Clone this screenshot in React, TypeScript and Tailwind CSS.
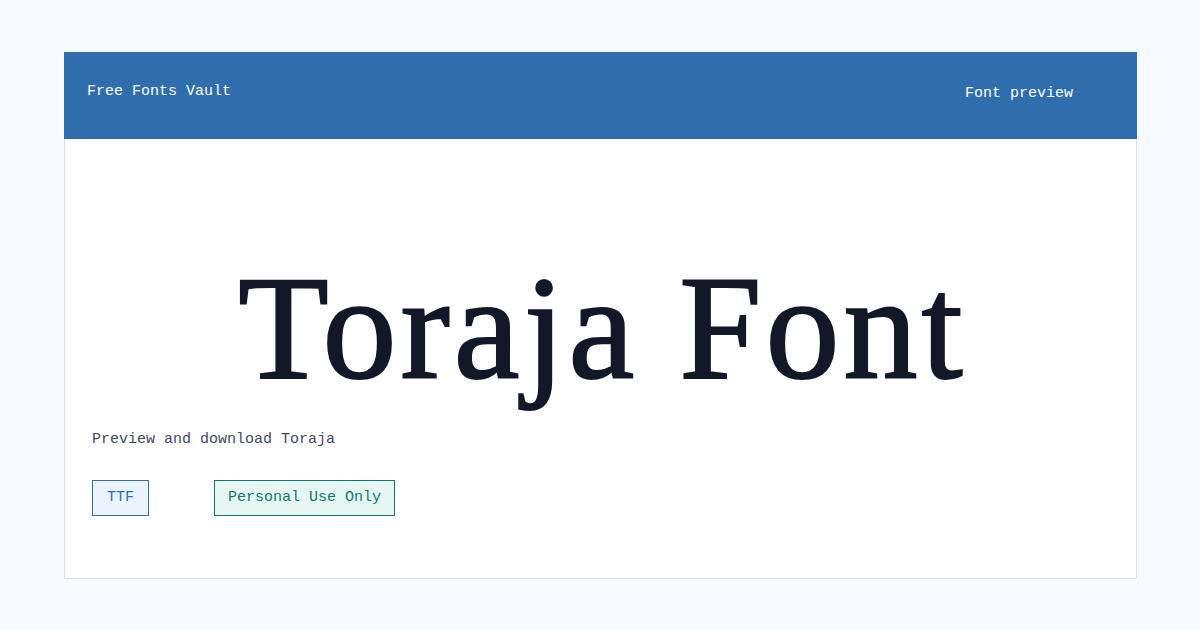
export default function App() {
  const mono = { fontFamily: '"Liberation Mono", "DejaVu Sans Mono", monospace' };
  return (
    <div className="min-h-[630px] w-[1200px] bg-[#f7faff] px-16 pt-[52px]" style={mono}>
      <div className="h-[527px] w-[1073px] border border-[#d9e2ee] bg-white">
        <header className="-mx-px -mt-px flex h-[87px] items-start justify-between bg-[#2f6dad] pl-[23px] pr-[64px] pt-[30px] text-[15px] leading-5 text-white">
          <span>Free Fonts Vault</span>
          <span className="mt-[2px]">Font preview</span>
        </header>
        <div className="px-[27px]">
          <h1
            className="mt-[115px] pl-[4px] text-center text-[148px] leading-none tracking-[4px] text-[#111827] [-webkit-text-stroke:2px_#111827]"
            style={{ fontFamily: '"Liberation Serif", "DejaVu Serif", serif' }}
          >
            Toraja Font
          </h1>
          <p className="mt-[28px] text-[15px] leading-5 text-[#3f4a5c]">Preview and download Toraja</p>
          <div className="mt-[30px] flex gap-[65px]">
            <span className="border border-[#2f6dad] bg-[#eaf3fe] px-[14px] py-[7px] text-[15px] leading-5 text-[#2f6dad]">TTF</span>
            <span className="border border-[#0f766e] bg-[#e6f6f2] px-[13px] py-[7px] text-[15px] leading-5 text-[#0f766e]">Personal Use Only</span>
          </div>
        </div>
      </div>
    </div>
  );
}
